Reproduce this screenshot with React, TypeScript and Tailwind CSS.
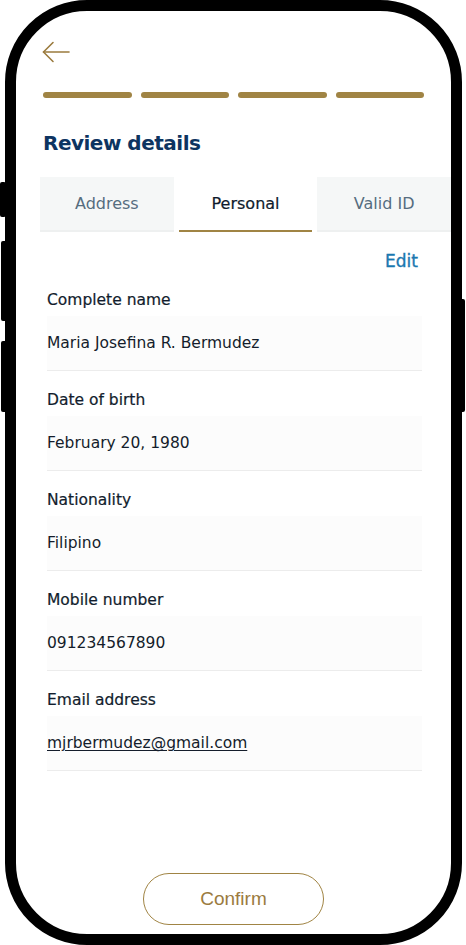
const fields = [
  { label: "Complete name", value: "Maria Josefina R. Bermudez" },
  { label: "Date of birth", value: "February 20, 1980" },
  { label: "Nationality", value: "Filipino" },
  { label: "Mobile number", value: "091234567890" },
  { label: "Email address", value: "mjrbermudez@gmail.com", link: true },
];

const tabs = ["Address", "Personal", "Valid ID"];

function SideButton({ className }: { className: string }) {
  return <div className={`absolute w-[6px] bg-black rounded-[2px] ${className}`} />;
}

function BackArrow() {
  return (
    <svg width="28" height="22" viewBox="0 0 28 22" fill="none" stroke="#9b7b3e" strokeWidth="1.6" strokeLinecap="round" strokeLinejoin="round">
      <path d="M27 11H1.5" />
      <path d="M11 1.5L1.5 11L11 20.5" />
    </svg>
  );
}

export default function App() {
  return (
    <div className="relative w-[466px] h-[945px] bg-white font-['DejaVu_Sans',sans-serif]">
      {/* side buttons */}
      <SideButton className="left-0 top-[182px] h-[35px]" />
      <SideButton className="left-[1px] top-[241px] h-[80px]" />
      <SideButton className="left-[1px] top-[341px] h-[71px]" />
      <SideButton className="right-[1px] top-[299px] h-[113px]" />

      {/* phone frame */}
      <div className="absolute left-[5px] right-[4px] top-0 bottom-0 rounded-[82px] border-[11px] border-black bg-white overflow-hidden">
        <div className="flex h-full flex-col">
          <div className="px-[26px] pt-[30px]">
            <button className="block">
              <BackArrow />
            </button>
          </div>

          {/* progress */}
          <div className="mt-[29px] flex gap-[9px] px-[27px]">
            {[0, 1, 2, 3].map((i) => (
              <div key={i} className="h-[6px] flex-1 rounded-full bg-[#a08444]" />
            ))}
          </div>

          <h1 className="mt-[30px] px-[27px] text-[20px] font-bold tracking-[-0.5px] text-[#0d3461]">
            Review details
          </h1>

          {/* tabs */}
          <div className="mt-[19px] ml-[24px] flex gap-[5px]">
            {tabs.map((t) => (
              <div
                key={t}
                className={`flex h-[55px] flex-1 items-center justify-center text-[16px] ${
                  t === "Personal"
                    ? "border-b-2 border-[#a08444] bg-white text-[#0f1b2d] [-webkit-text-stroke:0.2px]"
                    : "border-b-2 border-[#eef0f0] bg-[#f5f7f7] text-[#566d7f]"
                }`}
              >
                {t}
              </div>
            ))}
          </div>

          <div className="flex justify-end pr-[33px] pt-[19px]">
            <span className="text-[17px] leading-[20px] text-[#1a78b0] [-webkit-text-stroke:0.35px]">Edit</span>
          </div>

          {/* fields */}
          <div className="ml-[31px] mr-[29px]">
            {fields.map((f) => (
              <div key={f.label}>
                <div className="flex h-[45px] items-end pb-[4px] text-[15.5px] text-[#121d2d] [-webkit-text-stroke:0.2px]">
                  {f.label}
                </div>
                <div className="flex h-[55px] items-center border-b border-[#ececec] bg-[#fcfcfc] pt-[2px] text-[15.5px] text-[#141d2b]">
                  {f.link ? <span className="underline underline-offset-2">{f.value}</span> : f.value}
                </div>
              </div>
            ))}
          </div>

          <div className="mt-auto flex justify-center pb-[9px]">
            <button className="flex h-[52px] w-[181px] items-center justify-center rounded-full border-[1.5px] border-[#a08444] font-['Liberation_Sans',sans-serif] text-[19px] text-[#9b7b3e]">
              Confirm
            </button>
          </div>
        </div>
      </div>
    </div>
  );
}
